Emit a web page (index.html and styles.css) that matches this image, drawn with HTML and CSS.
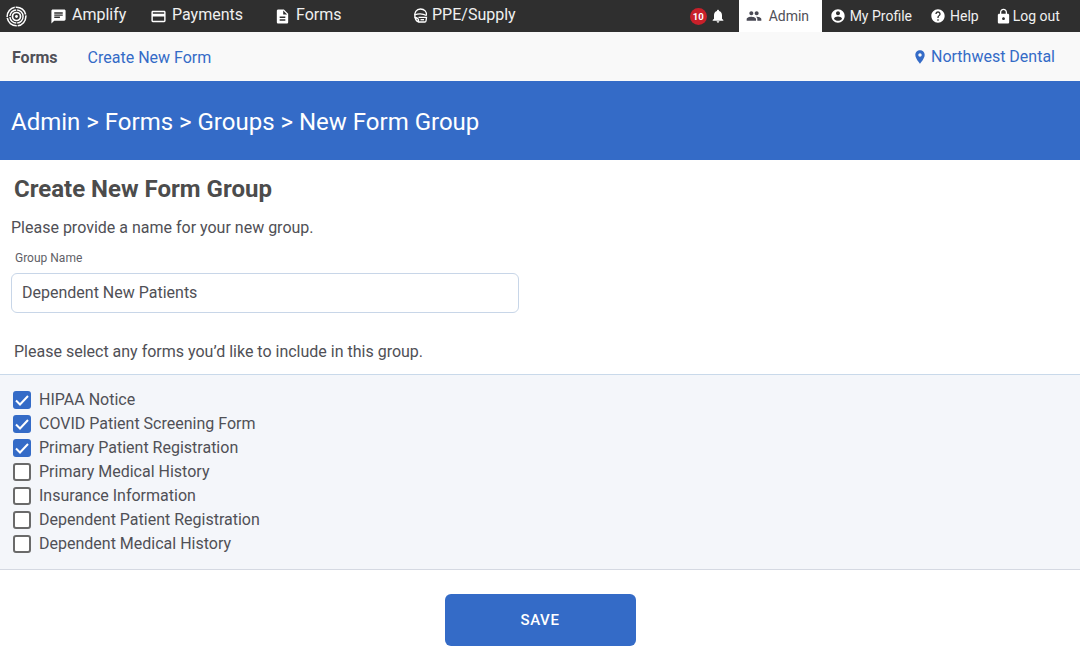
FILE: index.html
```html
<!DOCTYPE html>
<html lang="en">
<head>
<meta charset="utf-8">
<title>New Form Group</title>
<link rel="stylesheet" href="styles.css">
</head>
<body>
<header class="topbar">
  <svg class="logo" viewBox="0 0 22 22" width="21" height="21" fill="none" stroke="#fff">
    <circle cx="11" cy="11" r="9.800" stroke-width="1.600" stroke-dasharray="14 1"/>
    <circle cx="11" cy="11" r="6.900" stroke-width="1.500" stroke-dasharray="10 1"/>
    <circle cx="11" cy="11" r="4.200" stroke-width="1.800"/>
    <circle cx="11" cy="11" r="1.500" fill="#fff" stroke="none"/>
  </svg>
  <nav class="main-nav">
    <a class="main-link amplify"><svg viewBox="0 0 24 24" width="17" height="17"><path fill="#fff" d="M20 2H4c-1.100 0-2 .9-2 2v18l4-4h14c1.100 0 2-.9 2-2V4c0-1.100-.9-2-2-2zM6 9h12v2H6V9zm8 5H6v-2h8v2zm4-6H6V6h12v2z"/></svg>Amplify</a>
    <a class="main-link payments"><svg viewBox="0 0 24 24" width="17" height="17"><path fill="#fff" d="M20 4H4c-1.110 0-2 .89-2 2v12c0 1.110.89 2 2 2h16c1.110 0 2-.89 2-2V6c0-1.110-.89-2-2-2zm0 14H4v-6h16v6zm0-10H4V6h16v2z"/></svg>Payments</a>
    <a class="main-link forms"><svg viewBox="0 0 24 24" width="17" height="17"><path fill="#fff" d="M14 2H6c-1.100 0-2 .9-2 2v16c0 1.100.9 2 2 2h12c1.100 0 2-.9 2-2V8l-6-6zm2 16H8v-2h8v2zm0-4H8v-2h8v2zm-3-5V3.500L18.500 9H13z"/></svg>Forms</a>
    <a class="main-link ppe"><svg class="ppe-icon" viewBox="0 0 15 15" width="15" height="15" fill="none" stroke="#fff" stroke-width="1.300"><path d="M2 9.500C.8 4.500 3.500 1 7.500 1s6.500 3 5.900 6.500"/><path d="M1.500 7c4-1.700 8-1.700 12 .5"/><path d="M2 9.500c1.500 0 2.500.5 3.500 1.800v2.500C3.800 13.300 2.600 11.800 2 9.500z"/><path d="M5.500 9.300h8l-.5 3.700c-.1.600-.6 1-1.200 1H5.500"/><path d="M7.500 11.700h3.500"/></svg>PPE/Supply</a>
  </nav>
  <div class="alerts">
    <span class="badge">10</span>
    <svg viewBox="0 0 24 24" width="16" height="16"><path fill="#fff" d="M12 22c1.100 0 2-.9 2-2h-4c0 1.100.9 2 2 2zm6-6v-5c0-3.070-1.630-5.640-4.500-6.320V4c0-.83-.67-1.500-1.500-1.500s-1.500.67-1.500 1.500v.68C7.640 5.360 6 7.920 6 11v5l-2 2v1h16v-1l-2-2z"/></svg>
  </div>
  <a class="user-link admin"><svg viewBox="0 0 24 24" width="16" height="16"><path fill="#4a4a55" d="M16 11c1.660 0 2.990-1.340 2.990-3S17.660 5 16 5s-3 1.340-3 3 1.340 3 3 3zm-8 0c1.660 0 2.990-1.340 2.990-3S9.660 5 8 5 5 6.340 5 8s1.340 3 3 3zm0 2c-2.330 0-7 1.170-7 3.500V19h14v-2.500c0-2.330-4.670-3.500-7-3.500zm8 0c-.29 0-.62.020-.97.050 1.160.84 1.970 1.970 1.970 3.450V19h6v-2.500c0-2.330-4.670-3.500-7-3.500z"/></svg>Admin</a>
  <a class="user-link profile"><svg viewBox="0 0 24 24" width="16" height="16"><path fill="#fff" d="M12 2C6.480 2 2 6.480 2 12s4.480 10 10 10 10-4.480 10-10S17.520 2 12 2zm0 3c1.660 0 3 1.340 3 3s-1.340 3-3 3-3-1.340-3-3 1.340-3 3-3zm0 14.200c-2.500 0-4.710-1.280-6-3.220.03-1.990 4-3.080 6-3.080 1.990 0 5.970 1.090 6 3.080-1.290 1.940-3.500 3.220-6 3.220z"/></svg>My Profile</a>
  <a class="user-link help"><svg viewBox="0 0 24 24" width="16" height="16"><path fill="#fff" d="M12 2C6.480 2 2 6.480 2 12s4.480 10 10 10 10-4.480 10-10S17.520 2 12 2zm1 17h-2v-2h2v2zm2.070-7.750l-.9.920C13.450 12.900 13 13.500 13 15h-2v-.5c0-1.100.45-2.100 1.170-2.830l1.240-1.260c.37-.36.590-.86.590-1.410 0-1.100-.9-2-2-2s-2 .9-2 2H8c0-2.210 1.790-4 4-4s4 1.790 4 4c0 .88-.36 1.680-.93 2.250z"/></svg>Help</a>
  <a class="user-link logout"><svg viewBox="0 0 24 24" width="17" height="17"><path fill="#fff" d="M18 8h-1V6c0-2.760-2.240-5-5-5S7 3.240 7 6v2H6c-1.100 0-2 .9-2 2v10c0 1.100.9 2 2 2h12c1.100 0 2-.9 2-2V10c0-1.100-.9-2-2-2zm-6 9c-1.100 0-2-.9-2-2s.9-2 2-2 2 .9 2 2-.9 2-2 2zm3.100-9H8.900V6c0-1.710 1.390-3.100 3.100-3.100 1.710 0 3.100 1.390 3.100 3.100v2z"/></svg>Log out</a>
</header>

<div class="subbar">
  <strong class="sub-title">Forms</strong>
  <a class="sub-link">Create New Form</a>
  <a class="location"><svg viewBox="0 0 24 24" width="16" height="16"><path fill="#346bc7" d="M12 2C8.130 2 5 5.130 5 9c0 5.250 7 13 7 13s7-7.750 7-13c0-3.870-3.130-7-7-7zm0 9.500c-1.380 0-2.500-1.120-2.500-2.500s1.120-2.500 2.500-2.500 2.500 1.120 2.500 2.500-1.120 2.500-2.500 2.500z"/></svg>Northwest Dental</a>
</div>

<div class="banner">Admin &gt; Forms &gt; Groups &gt; New Form Group</div>

<main>
  <h1 class="page-title">Create New Form Group</h1>
  <p class="intro">Please provide a name for your new group.</p>
  <label class="field-label" for="group">Group Name</label>
  <input class="field" id="group" type="text" value="Dependent New Patients">
  <p class="select-text">Please select any forms you’d like to include in this group.</p>
  <ul class="form-list">
    <li class="form-item"><span class="box on"><svg viewBox="0 0 18 18" width="18" height="18"><path d="M3 9.500l4 4L15 5" fill="none" stroke="#fff" stroke-width="2"/></svg></span>HIPAA Notice</li>
    <li class="form-item"><span class="box on"><svg viewBox="0 0 18 18" width="18" height="18"><path d="M3 9.500l4 4L15 5" fill="none" stroke="#fff" stroke-width="2"/></svg></span>COVID Patient Screening Form</li>
    <li class="form-item"><span class="box on"><svg viewBox="0 0 18 18" width="18" height="18"><path d="M3 9.500l4 4L15 5" fill="none" stroke="#fff" stroke-width="2"/></svg></span>Primary Patient Registration</li>
    <li class="form-item"><span class="box"></span>Primary Medical History</li>
    <li class="form-item"><span class="box"></span>Insurance Information</li>
    <li class="form-item"><span class="box"></span>Dependent Patient Registration</li>
    <li class="form-item"><span class="box"></span>Dependent Medical History</li>
  </ul>
  <div class="actions"><button class="save" type="button">SAVE</button></div>
</main>
</body>
</html>
```
FILE: styles.css
```css
* { box-sizing: border-box; }
html, body { margin: 0; padding: 0; }
body { font-family: Roboto, "Liberation Sans", sans-serif; color: #505056; background: #fff; height: 667px; overflow: hidden; }
svg { display: block; flex: none; }

.topbar { display: flex; align-items: center; height: 32px; background: #2f2f2f; color: #f0f0f0; padding-left: 6px; }
.logo { margin-top: 1px; }
.main-nav { display: flex; align-items: center; }
.main-link { display: flex; align-items: center; font-size: 16px; padding-bottom: 3px; }
.main-link svg { margin-top: 3px; }
.amplify { margin-left: 23px; gap: 5px; width: 100px; }
.payments { width: 124px; gap: 5px; }
.forms { width: 139px; gap: 5px; }
.ppe { gap: 4px; }
.main-link .ppe-icon { margin-top: 1px; }

.alerts { display: flex; align-items: center; gap: 3px; margin-left: 174px; }
.badge { width: 17px; height: 17px; margin-top: 1px; border-radius: 50%; background: #c8202a; color: #fff; font-size: 9.500px; font-weight: 700; display: flex; align-items: center; justify-content: center; }

.user-link { display: flex; align-items: center; height: 32px; font-size: 14px; gap: 4px; }
.admin { margin-left: 13px; width: 83px; padding-left: 7px; gap: 7px; background: #fff; color: #505058; }
.profile { margin-left: 8px; }
.help { margin-left: 18px; }
.logout { margin-left: 16px; gap: 1px; }

.subbar { display: flex; align-items: center; height: 49px; background: #f9f9f9; padding: 2px 25px 0 12px; font-size: 16px; }
.sub-title { font-size: 16px; font-weight: 700; color: #505058; margin-right: 30px; }
.sub-link { color: #346bc7; }
.location { margin-left: auto; display: flex; align-items: center; gap: 3px; color: #346bc7; padding-bottom: 2px; }

.banner { height: 79px; background: #346bc7; color: #fff; font-size: 24px; display: flex; align-items: center; padding: 3px 11px 0; }

.page-title { margin: 0; padding: 16px 14px 0; font-size: 24px; line-height: 27px; font-weight: 700; color: #4c4c4c; }
.intro { margin: 0; padding: 15px 11px 0; font-size: 16px; line-height: 20px; }
.field-label { display: block; padding: 12px 15px 0; font-size: 12px; line-height: 16px; color: #5f5f68; }
.field { display: block; width: 508px; height: 40px; margin: 7px 0 0 11px; padding: 0 10px 2px; border: 1px solid #c8d6e8; border-radius: 6px; font: 400 16px Roboto, "Liberation Sans", sans-serif; color: #505056; background: #fff; }
.select-text { margin: 0; padding: 29px 14px 0; font-size: 16px; line-height: 20px; }

.form-list { list-style: none; margin: 12px 0 0; padding: 12px 13px 14px; background: #f4f6fa; border-top: 1px solid #c9d9ea; border-bottom: 1px solid #d5d9e2; }
.form-item { display: flex; align-items: center; height: 24px; font-size: 16px; gap: 8px; }
.box { width: 18px; height: 18px; margin-top: 2px; border: 2px solid #6a6a6a; border-radius: 3px; background: #fff; flex: none; }
.box.on { border: none; background: #346bc7; }

.actions { display: flex; justify-content: center; padding-top: 24px; }
.save { width: 191px; height: 52px; border: none; border-radius: 6px; background: #346bc7; color: #fff; font: 500 15px Roboto, "Liberation Sans", sans-serif; letter-spacing: .6px; }
```
